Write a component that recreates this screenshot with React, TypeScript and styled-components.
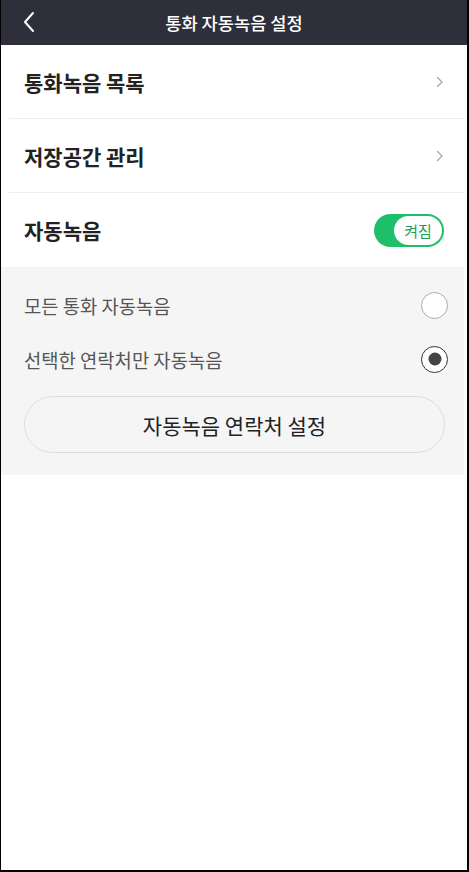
import styled, { createGlobalStyle } from 'styled-components';

const GlobalStyle = createGlobalStyle`
  html, body {
    margin: 0;
    padding: 0;
    background: #ffffff;
  }

  body {
    font-family: 'Noto Sans CJK KR', 'Noto Sans', sans-serif;
  }
`;

const ChevronRight = () => (
  <svg width='8' height='12' viewBox='0 0 8 12' fill='none'>
    <path d='M1.5 1.5L6 6L1.5 10.5' stroke='#a9a9a9' strokeWidth='1.4' strokeLinecap='round' strokeLinejoin='round' />
  </svg>
);

const BackIcon = () => (
  <svg width='14' height='22' viewBox='0 0 14 22' fill='none'>
    <path d='M11 2L3 11L11 20' stroke='#ffffff' strokeWidth='2' strokeLinecap='round' strokeLinejoin='round' />
  </svg>
);

const App = () => {
  return (
    <>
      <GlobalStyle />
      <Screen>
        <Header>
          <BackButton aria-label='뒤로'>
            <BackIcon />
          </BackButton>
          <Title>통화 자동녹음 설정</Title>
        </Header>
        <Content>
          <MenuRow>
            <RowLabel>통화녹음 목록</RowLabel>
            <ChevronRight />
          </MenuRow>
          <MenuRow>
            <RowLabel>저장공간 관리</RowLabel>
            <ChevronRight />
          </MenuRow>
          <MenuRow $last>
            <RowLabel>자동녹음</RowLabel>
            <Toggle>
              <ToggleKnob>켜짐</ToggleKnob>
            </Toggle>
          </MenuRow>
          <OptionPanel>
            <OptionRow>
              <OptionLabel>모든 통화 자동녹음</OptionLabel>
              <Radio />
            </OptionRow>
            <OptionRow>
              <OptionLabel>선택한 연락처만 자동녹음</OptionLabel>
              <Radio $checked />
            </OptionRow>
            <ContactButton>자동녹음 연락처 설정</ContactButton>
          </OptionPanel>
        </Content>
      </Screen>
    </>
  );
};

const Screen = styled.div`
  box-sizing: border-box;
  width: 469px;
  height: 872px;
  border-left: 1px solid #000;
  border-right: 2px solid #000;
  border-bottom: 2px solid #000;
  background: #ffffff;
  overflow: hidden;
`;

const Header = styled.header`
  position: relative;
  display: flex;
  align-items: center;
  justify-content: center;
  height: 45px;
  background-color: #2e2f3b;
`;

const BackButton = styled.button`
  position: absolute;
  left: 21px;
  top: 11px;
  display: flex;
  padding: 0;
  border: none;
  background: none;
`;

const Title = styled.h1`
  margin: 0 0 1px 0;
  color: #ffffff;
  font-size: 17.6px;
  font-weight: 500;
`;

const Content = styled.main`
  margin-right: 3px;
`;

const MenuRow = styled.div<{ $last?: boolean }>`
  position: relative;
  display: flex;
  align-items: center;
  justify-content: space-between;
  height: 74px;
  padding: 0 20px 0 23px;

  &::after {
    content: '';
    display: ${({ $last }) => ($last ? 'none' : 'block')};
    position: absolute;
    left: 8px;
    right: 0;
    bottom: 0;
    height: 1px;
    background: #efefef;
  }
`;

const RowLabel = styled.span`
  color: #222222;
  font-size: 21px;
  font-weight: 700;
`;

const Toggle = styled.div`
  display: flex;
  align-items: center;
  justify-content: flex-end;
  box-sizing: border-box;
  width: 70px;
  height: 33px;
  padding: 2px;
  border-radius: 17px;
  background-color: #1dbf68;
`;

const ToggleKnob = styled.div`
  display: flex;
  align-items: center;
  justify-content: center;
  width: 48px;
  height: 29px;
  border-radius: 15px;
  background-color: #ffffff;
  color: #1a9e55;
  font-size: 15px;
  font-weight: 400;
`;

const OptionPanel = styled.section`
  padding: 11px 19px 22px 23px;
  background-color: #f5f5f5;
`;

const OptionRow = styled.div`
  display: flex;
  align-items: center;
  justify-content: space-between;
  height: 54px;
  margin-right: -3px;
`;

const OptionLabel = styled.span`
  color: #555555;
  font-size: 18.8px;
  font-weight: 400;
`;

const Radio = styled.span<{ $checked?: boolean }>`
  position: relative;
  box-sizing: border-box;
  width: 27px;
  height: 27px;
  border-radius: 50%;
  border: 1.5px solid ${({ $checked }) => ($checked ? '#333333' : '#aaaaaa')};
  background-color: #ffffff;

  &::after {
    content: '';
    display: ${({ $checked }) => ($checked ? 'block' : 'none')};
    position: absolute;
    top: 50%;
    left: 50%;
    width: 13px;
    height: 13px;
    border-radius: 50%;
    background-color: #444444;
    transform: translate(-50%, -50%);
  }
`;

const ContactButton = styled.button`
  display: block;
  box-sizing: border-box;
  width: 100%;
  height: 57px;
  margin-top: 10px;
  border: 1px solid #dedede;
  border-radius: 29px;
  background-color: #f5f5f5;
  color: #222222;
  font-family: inherit;
  font-size: 21px;
  font-weight: 400;
`;

export default App;
